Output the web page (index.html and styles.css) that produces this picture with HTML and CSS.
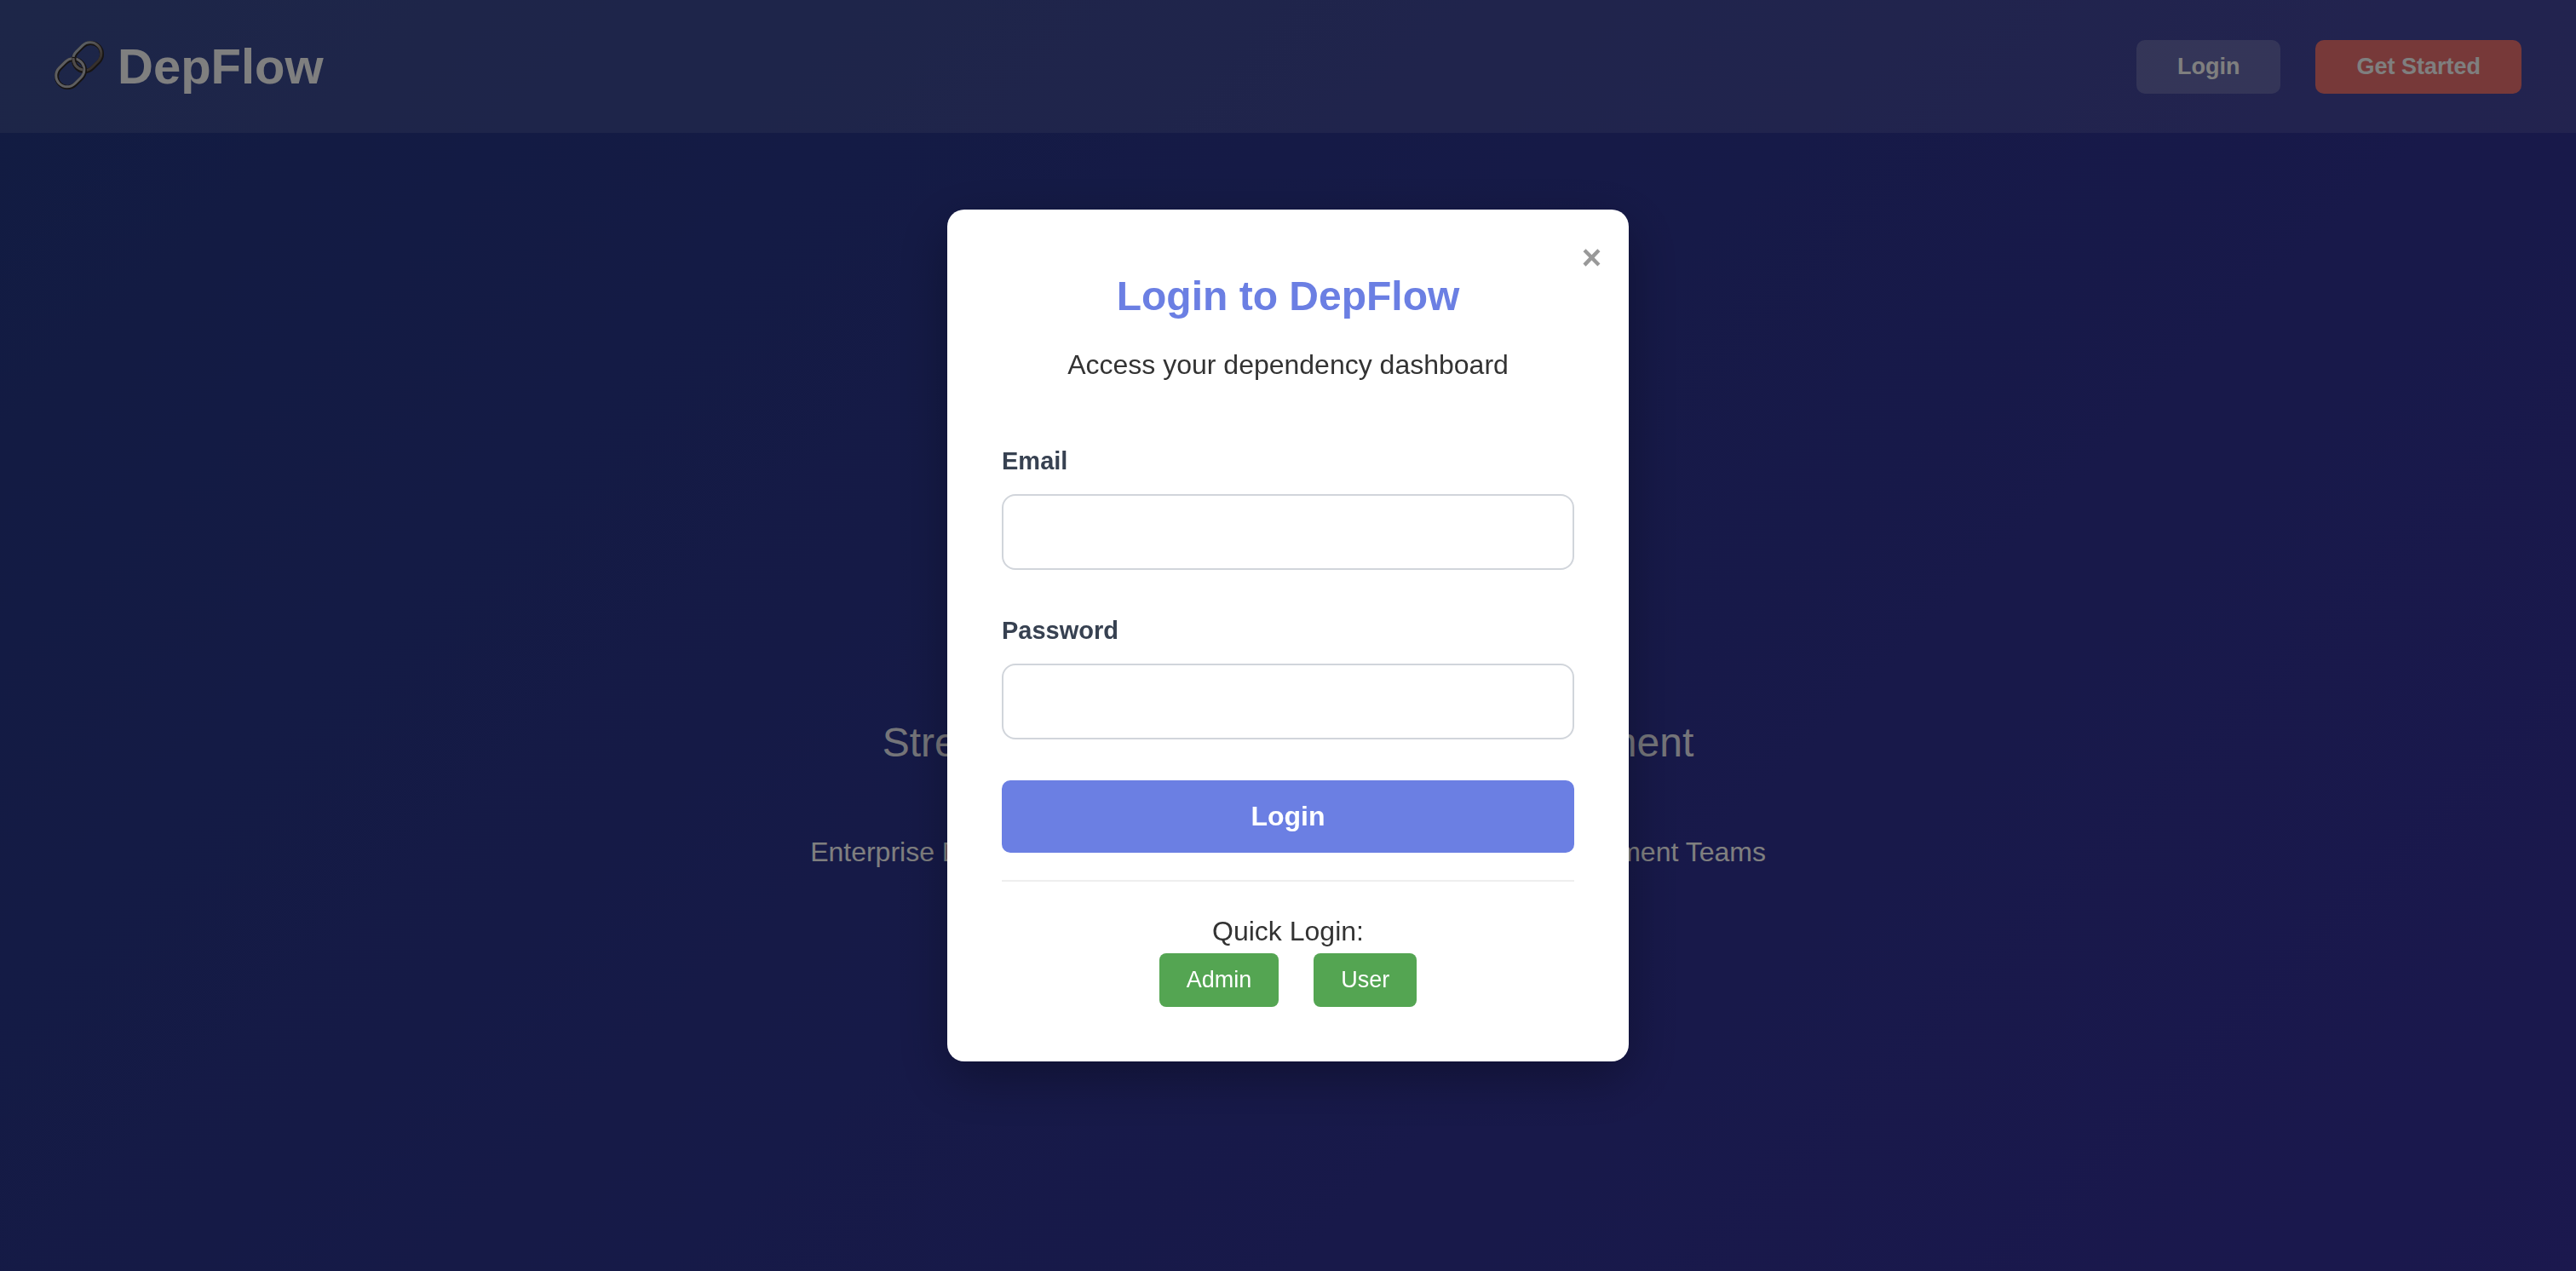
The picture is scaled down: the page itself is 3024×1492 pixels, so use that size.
FILE: index.html
```html
<!DOCTYPE html>
<html lang="en">
<head>
<meta charset="utf-8">
<meta name="viewport" content="width=device-width, initial-scale=1">
<title>DepFlow</title>
<link rel="stylesheet" href="styles.css">
</head>
<body>
<header class="header">
  <div class="logo">
    <svg class="logo-icon" viewBox="0 0 60 60" aria-hidden="true">
      <defs>
        <linearGradient id="metal-upper" x1="0" y1="0" x2="0" y2="1">
          <stop offset="0" stop-color="#b4bcc4"/>
          <stop offset="0.5" stop-color="#a09894"/>
          <stop offset="1" stop-color="#6c605a"/>
        </linearGradient>
      </defs>
      <g fill="none">
        <g transform="rotate(-45 39 19)">
          <rect x="21" y="6" width="36" height="26" rx="13" stroke="#2e2826" stroke-width="5"/>
          <rect x="21" y="5" width="36" height="26" rx="13" stroke="url(#metal-upper)" stroke-width="3"/>
        </g>
        <g transform="rotate(-45 19 38)">
          <rect x="1" y="25" width="36" height="26" rx="13" stroke="#2e2826" stroke-width="5"/>
          <rect x="1" y="24" width="36" height="26" rx="13" stroke="#bcbcc0" stroke-width="3"/>
        </g>
        <path d="M23 19c-1 8 3 13 10 15" stroke="#2e2826" stroke-width="5"/>
        <path d="M22 20c0 7 4 12 11 14" stroke="#a09894" stroke-width="3"/>
      </g>
    </svg>
    <span>DepFlow</span>
  </div>
  <nav class="nav">
    <button class="nav-button" type="button">Login</button>
    <button class="nav-button nav-button-primary" type="button">Get Started</button>
  </nav>
</header>
<main class="hero">
  <p class="hero-tagline">Streamline Your Dependencies Management</p>
  <p class="hero-text">Enterprise Dependency Management Platform for Modern Development Teams</p>
</main>
<div class="overlay">
  <section class="modal" role="dialog" aria-modal="true" aria-labelledby="login-title">
    <button class="close" type="button" aria-label="Close">×</button>
    <h2 class="modal-title" id="login-title">Login to DepFlow</h2>
    <p class="modal-text">Access your dependency dashboard</p>
    <form class="form">
      <div class="field">
        <label for="email">Email</label>
        <input id="email" type="email">
      </div>
      <div class="field">
        <label for="password">Password</label>
        <input id="password" type="password">
      </div>
      <button class="submit" type="submit">Login</button>
    </form>
    <div class="quick">
      <p class="quick-label">Quick Login:</p>
      <div class="quick-buttons">
        <button class="quick-button" type="button">Admin</button>
        <button class="quick-button" type="button">User</button>
      </div>
    </div>
  </section>
</div>
</body>
</html>
```

FILE: styles.css
```css
* {
  box-sizing: border-box;
  margin: 0;
  padding: 0;
}

body {
  min-height: 100vh;
  background: linear-gradient(135deg, #243884, #36309c);
  color: #333;
  font-family: "Liberation Sans", Arial, sans-serif;
  font-size: 32px;
  line-height: 52px;
}

button,
input {
  border: none;
  font-family: inherit;
}

button {
  cursor: pointer;
}

.header {
  display: flex;
  align-items: center;
  justify-content: space-between;
  padding: 32px 64px;
  background: rgba(255, 255, 255, 0.1);
}

.logo {
  display: flex;
  align-items: center;
  gap: 14px;
  color: #fff;
  font-size: 58px;
  font-weight: bold;
  line-height: 92px;
}

.logo-icon {
  width: 60px;
  height: 60px;
}

.nav {
  display: flex;
  gap: 41px;
}

.nav-button {
  padding: 16px 48px;
  border-radius: 10px;
  background: rgba(255, 255, 255, 0.2);
  color: #fff;
  font-size: 27px;
  font-weight: bold;
  line-height: 31px;
}

.nav-button-primary {
  background: #ee7272;
}

.hero {
  display: flex;
  flex-direction: column;
  align-items: center;
  gap: 64px;
  padding: 678px 64px 0;
  color: #fff;
  text-align: center;
}

.hero-tagline {
  font-size: 48px;
  line-height: 76px;
  opacity: 0.9;
}

.overlay {
  position: fixed;
  inset: 0;
  display: flex;
  align-items: center;
  justify-content: center;
  background: rgba(0, 0, 0, 0.5);
}

.modal {
  position: relative;
  width: 800px;
  max-width: 90%;
  padding: 64px;
  border-radius: 20px;
  background: #fff;
  box-shadow: 0 20px 60px rgba(0, 0, 0, 0.3);
}

.close {
  position: absolute;
  top: 32px;
  right: 32px;
  background: none;
  color: #999;
  font-size: 40px;
  font-weight: bold;
  line-height: 48px;
}

.modal-title {
  color: #6b7fe3;
  font-size: 48px;
  line-height: 76px;
  text-align: center;
}

.modal-text {
  margin-top: 16px;
  text-align: center;
}

.form {
  margin-top: 64px;
}

.field {
  margin-bottom: 48px;
}

.field label {
  display: block;
  margin-bottom: 16px;
  color: #374151;
  font-size: 29px;
  font-weight: bold;
  line-height: 46px;
}

.field input {
  display: block;
  width: 100%;
  height: 89px;
  padding: 24px;
  border: 2px solid #d1d5db;
  border-radius: 16px;
  background: #fff;
  font-size: 32px;
}

.submit {
  width: 100%;
  padding: 24px;
  border-radius: 10px;
  background: #6b7fe3;
  color: #fff;
  font-size: 32px;
  font-weight: bold;
  line-height: 37px;
}

.quick {
  margin-top: 32px;
  padding-top: 32px;
  border-top: 2px solid #eee;
  text-align: center;
}

.quick-buttons {
  display: flex;
  justify-content: center;
  gap: 41px;
}

.quick-button {
  padding: 16px 32px;
  border-radius: 8px;
  background: #54a552;
  color: #fff;
  font-size: 27px;
  line-height: 31px;
}
```
